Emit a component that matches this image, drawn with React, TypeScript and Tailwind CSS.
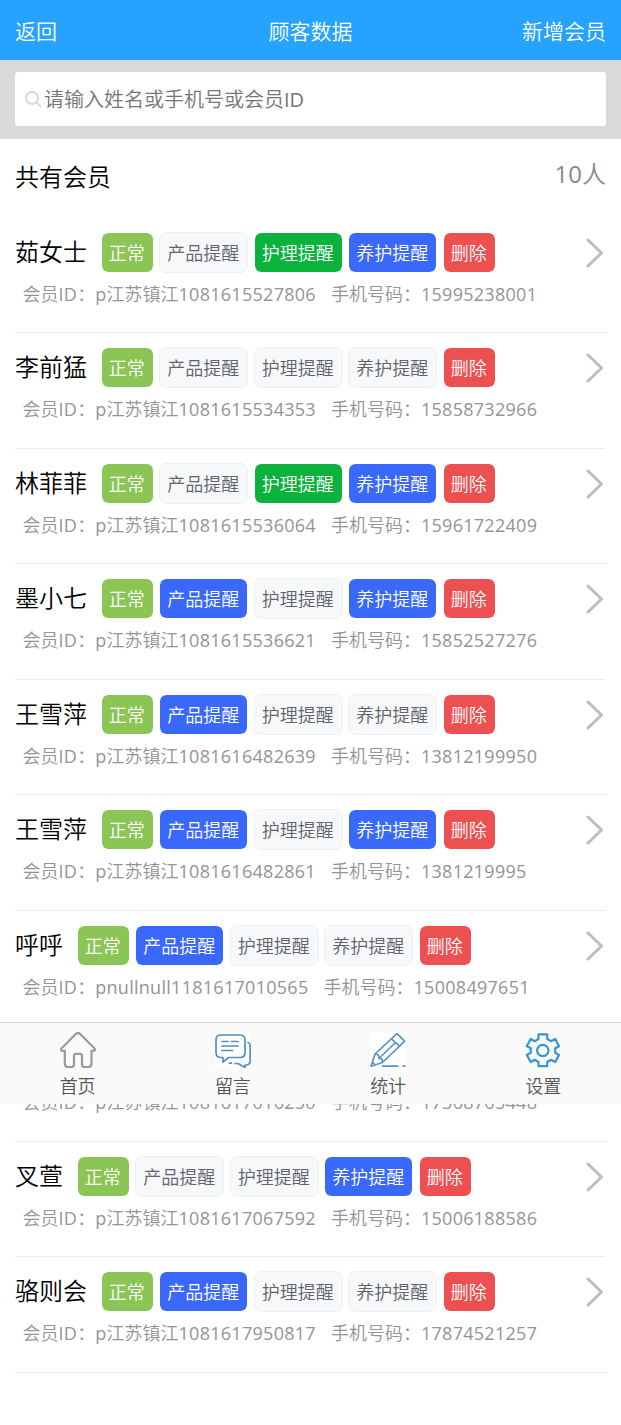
import type { ReactNode } from "react";

type Tone = "off" | "green" | "blue";

interface Member {
  name: string;
  id: [string, string, string];
  phone: string;
  tones: [Tone, Tone, Tone];
}

const members: Member[] = [
  { name: "茹女士", id: ["p", "江苏镇江", "1081615527806"], phone: "15995238001", tones: ["off", "green", "blue"] },
  { name: "李前猛", id: ["p", "江苏镇江", "1081615534353"], phone: "15858732966", tones: ["off", "off", "off"] },
  { name: "林菲菲", id: ["p", "江苏镇江", "1081615536064"], phone: "15961722409", tones: ["off", "green", "blue"] },
  { name: "墨小七", id: ["p", "江苏镇江", "1081615536621"], phone: "15852527276", tones: ["blue", "off", "blue"] },
  { name: "王雪萍", id: ["p", "江苏镇江", "1081616482639"], phone: "13812199950", tones: ["blue", "off", "off"] },
  { name: "王雪萍", id: ["p", "江苏镇江", "1081616482861"], phone: "1381219995", tones: ["blue", "off", "blue"] },
  { name: "呼呼", id: ["pnullnull", "", "1181617010565"], phone: "15008497651", tones: ["blue", "off", "off"] },
  { name: "李女士", id: ["p", "江苏镇江", "1081617016250"], phone: "17368765448", tones: ["off", "off", "off"] },
  { name: "叉萱", id: ["p", "江苏镇江", "1081617067592"], phone: "15006188586", tones: ["off", "off", "blue"] },
  { name: "骆则会", id: ["p", "江苏镇江", "1081617950817"], phone: "17874521257", tones: ["blue", "off", "off"] },
];

const toneClass: Record<Tone, string> = {
  off: "bg-[#f7f8fa] border-[#eff0f3] text-[#5f636b]",
  green: "bg-[#0bb23c] border-white text-white",
  blue: "bg-[#3a68fb] border-white text-white",
};

const labels = ["产品提醒", "护理提醒", "养护提醒"];

function Tag({ className, children }: { className: string; children: ReactNode }) {
  return (
    <span className={`flex h-[41px] items-center justify-center rounded-[7px] border bg-clip-padding pt-px pr-px text-[18px] leading-none ${className}`}>
      {children}
    </span>
  );
}

function Latin({ children }: { children: ReactNode }) {
  return <span className="font-normal tracking-[0.28px]">{children}</span>;
}

function MemberRow({ member }: { member: Member }) {
  return (
    <li className="mx-[15px] flex h-[115.5px] flex-col border-b border-[#ececec] pt-[14.4px]">
      <div className="flex h-[41px] items-center">
        <span className="pb-[1px] text-[24px] leading-none text-black">{member.name}</span>
        <div className="ml-[13.8px] flex gap-[5.5px]">
          <Tag className="w-[53px] border-white bg-[#8bc556] text-white">正常</Tag>
          {labels.map((label, i) => (
            <Tag key={label} className={`w-[89px] ${toneClass[member.tones[i]]}`}>{label}</Tag>
          ))}
          <Tag className="w-[53px] border-white bg-[#ed5050] text-white">删除</Tag>
        </div>
        <svg className="mt-px mr-[2px] ml-auto" width="18" height="30" viewBox="0 0 18 30" fill="none" stroke="#bdbdbd" strokeWidth="3" strokeLinecap="round" strokeLinejoin="round">
          <path d="M2 2 15.5 15 2 28" />
        </svg>
      </div>
      <div className="flex h-[42px] items-center gap-[15px] pl-[7.5px] text-[18px] leading-none whitespace-nowrap text-[#949494]">
        <span>会员<span className="font-normal tracking-[0.3px]">ID</span>：<Latin>{member.id[0]}</Latin>{member.id[1]}<Latin>{member.id[2]}</Latin></span>
        <span>手机号码：<Latin>{member.phone}</Latin></span>
      </div>
    </li>
  );
}

const navItems = [
  {
    label: "首页",
    icon: (
      <svg width="36" height="36" viewBox="0 0 36 36" fill="none" stroke="#9a9a9a" strokeWidth="2.2" strokeLinejoin="round">
        <path d="M15.8 2Q18 .2 20.2 2L34.3 16.2Q36 18.8 33.5 18.8H31.5V31.5Q31.5 35 28.5 35H24.5Q22 35 22 32.5V24Q22 21.8 20 21.8H16Q14 21.8 14 24V32.5Q14 35 11.5 35H8Q4.8 35 4.8 31.5V18.8H2.5Q0 18.8 1.7 16.2Z" />
      </svg>
    ),
  },
  {
    label: "留言",
    icon: (
      <svg className="bg-white" width="36" height="36" viewBox="0 0 36 36" fill="none" stroke="#508fc2" strokeWidth="1.7" strokeLinecap="round" strokeLinejoin="round">
        <path d="M6 3H25Q30 3 30 8V20.5Q30 25.5 25 25.5H13.5L8 30.2V25.5H6Q1 25.5 1 20.5V8Q1 3 6 3Z" />
        <path d="M33 10.5Q35.2 11 35.2 14V28.5Q35.2 33 31 33H30V35.5L23 31.5H20M16.5 31.2H14.5M7 9.5H13M16.5 9.5H23M7 14H23M7 18.5H17.5" />
      </svg>
    ),
  },
  {
    label: "统计",
    icon: (
      <svg className="bg-white" width="36" height="36" viewBox="0 0 36 36" fill="none" stroke="#5594c4" strokeWidth="1.7" strokeLinejoin="round">
        <path d="M27 1.7 34.7 9.2 12.5 30.5 1 34.2 5 22ZM21.5 6.8 29.5 14.2M5 22 8.5 22.8 9 26.5 12 27 12.5 30.5M9 26.5 25.5 10.5M2.3 30 5.2 33" />
        <path d="M12 34.2H28.5M32.5 34.2H35.5" />
      </svg>
    ),
  },
  {
    label: "设置",
    icon: (
      <svg width="36" height="36" viewBox="0 0 36 36" fill="none" stroke="#3797cd" strokeWidth="2.2" strokeLinejoin="round">
        <path d="M13.5 2.3H22.2V7L26 9.2L30.2 7L34 14.2L30.2 16.2V20.8L34 23L30.2 30L26 27.8L22.2 30V34.2H13.5V30L9.8 27.8L5.7 30L1.8 23L5.8 20.8V16.2L1.8 14.2L5.7 7L9.8 9.2L13.5 7Z" />
        <circle cx="17.8" cy="18.5" r="5.7" />
      </svg>
    ),
  },
];

export default function App() {
  return (
    <div className="relative h-[1425px] w-full overflow-hidden bg-white font-['Open_Sans','Noto_Sans_CJK_SC',sans-serif] font-[350]">
      <header className="grid h-[60px] grid-cols-3 items-center bg-[#26a2ff] px-[15px] pt-[3px] text-[21px] leading-none text-white">
        <span>返回</span>
        <span className="text-center">顾客数据</span>
        <span className="text-right">新增会员</span>
      </header>
      <div className="h-[79px] bg-[#d9d9d9] px-[15px] pt-[12px]">
        <div className="flex h-[54px] items-center rounded-[3px] bg-white pl-[10px] text-[20px] leading-none text-[#757575]">
          <svg className="mr-[2px]" width="17" height="17" viewBox="0 0 17 17" fill="none" stroke="#d9d9d9" strokeWidth="2" strokeLinecap="round">
            <circle cx="7" cy="7" r="6" />
            <path d="m11.5 11.5 4 4" />
          </svg>
          <span className="pt-px">请输入姓名或手机号或会员<span className="font-normal">ID</span></span>
        </div>
      </div>
      <div className="flex h-[78.5px] items-center justify-between px-[15px] leading-none">
        <span className="pb-[3px] text-[24px] text-black">共有会员</span>
        <span className="pb-[8px] text-[24px] text-[#888]"><span className="font-normal">10</span>人</span>
      </div>
      <ul>
        {members.map((m) => <MemberRow key={m.id[2]} member={m} />)}
      </ul>
      <nav className="absolute top-[1022px] left-0 grid h-[82px] w-full grid-cols-4 border-t border-[#d3d3d3] bg-[#fafafa]">
        {navItems.map((item) => (
          <a key={item.label} className="flex flex-col items-center pt-[9px] text-[18px] leading-none text-[#555]">
            {item.icon}
            <span className="mt-[8.5px]">{item.label}</span>
          </a>
        ))}
      </nav>
    </div>
  );
}
